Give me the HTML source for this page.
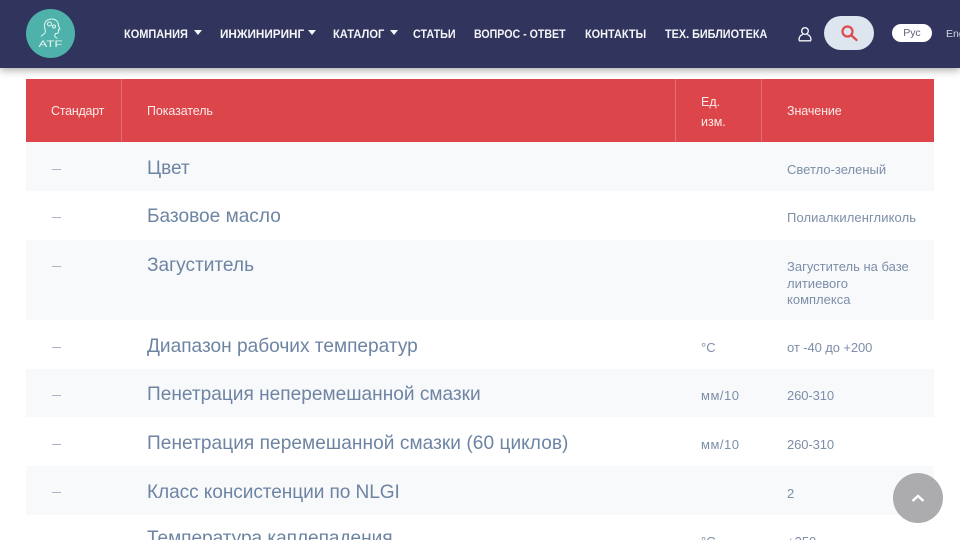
<!DOCTYPE html>
<html lang="ru"><head><meta charset="utf-8"><style>
html,body{margin:0;padding:0;width:960px;height:540px;overflow:hidden;background:#fff}
body{position:relative;font-family:"Liberation Sans",sans-serif}
.a{position:absolute;white-space:nowrap}
.hdr{left:0;top:0;width:960px;height:68px;background:#31345c;box-shadow:0 2px 8px rgba(0,0,0,.35)}
.n{top:27px;font-size:12px;line-height:14px;font-weight:bold;color:#f4f5f8;transform-origin:0 50%}
.car{top:30px;width:0;height:0;border-left:4.500px solid transparent;border-right:4.500px solid transparent;border-top:5px solid #f4f5f8}
.r{left:26px;width:908px}
.alt{background:#f8f9fb}
.h{color:#fbeaea;font-size:12.500px;line-height:16px}
.d{left:52px;width:9px;height:1px;background:#a9b3c4}
.t{left:147px;font-size:19.100px;line-height:22px;color:#6d84a3}
.v{font-size:13px;line-height:16px;color:#7d8ea8}
.sep{width:1px;top:79px;height:63px;background:#e66c6f}
</style></head><body>
<div class="a hdr"></div>
<svg class="a" style="left:26px;top:9px" width="49" height="49" viewBox="0 0 49 49">
<circle cx="24.500" cy="24.500" r="24.500" fill="#4fb2aa"/>
<g fill="none" stroke="#e8f5f3" stroke-width="1">
<path d="M19 24c1-2 0-4-.5-6-.8-5 3-8 7-8 4.500 0 7 3 7 6.500 0 1 1 2.500 1.500 3.500l-1.500.5v2.500c0 1-1 1.500-3 1.500l-1 3"/>
<path d="M19 24c-1 1.500-3 2-4 3.500M28.500 27.500l3 2"/>
<circle cx="23.500" cy="15" r="2"/><circle cx="28" cy="17.500" r="1.500"/>
</g>
<text x="12.500" y="38" textLength="24" lengthAdjust="spacingAndGlyphs" font-family="Liberation Sans" font-size="9" fill="#e8f5f3">ATF</text>
</svg>
<div class="a n" style="left:124px;transform:scaleX(.914)">КОМПАНИЯ</div><div class="a car" style="left:194px"></div>
<div class="a n" style="left:220px;transform:scaleX(.977)">ИНЖИНИРИНГ</div><div class="a car" style="left:308px"></div>
<div class="a n" style="left:333px;transform:scaleX(.927)">КАТАЛОГ</div><div class="a car" style="left:390px"></div>
<div class="a n" style="left:413px;transform:scaleX(.896)">СТАТЬИ</div>
<div class="a n" style="left:474px;transform:scaleX(.885)">ВОПРОС - ОТВЕТ</div>
<div class="a n" style="left:585px;transform:scaleX(.91)">КОНТАКТЫ</div>
<div class="a n" style="left:665px;transform:scaleX(.903)">ТЕХ. БИБЛИОТЕКА</div>
<svg class="a" style="left:797px;top:26px" width="16" height="16" viewBox="0 0 16 16" fill="none" stroke="#f4f5f8" stroke-width="1.400">
<circle cx="8" cy="5" r="3.300"/><path d="M2 14.500c0-3.500 1.500-5.500 3.800-6M14 14.500c0-3.500-1.500-5.500-3.800-6M2 14.800h12"/></svg>
<div class="a" style="left:824px;top:16px;width:50px;height:34px;border-radius:17px;background:#dde5ee"></div>
<svg class="a" style="left:840px;top:24px" width="18" height="18" viewBox="0 0 18 18" fill="none" stroke="#dc4a4d" stroke-width="2.200">
<circle cx="7.500" cy="7.500" r="5"/><path d="M11 11l5.500 5" stroke-linecap="round"/></svg>
<div class="a" style="left:892px;top:24px;width:40px;height:18px;border-radius:9px;background:#fff;color:#5c6478;font-size:10.500px;line-height:19px;text-align:center">Рус</div>
<div class="a" style="left:946px;top:27px;color:#d5d8e2;font-size:10.500px;line-height:14px">Eng</div>

<div class="a r" style="top:79px;height:63px;background:#dc4549"></div>
<div class="a sep" style="left:121px"></div><div class="a sep" style="left:675px"></div><div class="a sep" style="left:761px"></div>
<div class="a h" style="left:51px;top:103px;letter-spacing:-.25px">Стандарт</div>
<div class="a h" style="left:147px;top:103px;letter-spacing:-.1px">Показатель</div>
<div class="a h" style="left:701px;top:92px;line-height:20px">Ед.<br>изм.</div>
<div class="a h" style="left:787px;top:103px;letter-spacing:-.1px">Значение</div>

<div class="a r alt" style="top:142px;height:49px"></div>
<div class="a r alt" style="top:240px;height:80px"></div>
<div class="a r alt" style="top:369px;height:48px"></div>
<div class="a r alt" style="top:466px;height:49px"></div>

<div class="a d" style="top:169px"></div><div class="a t" style="top:158px">Цвет</div>
<div class="a v" style="left:787px;top:162px">Светло-зеленый</div>
<div class="a d" style="top:217px"></div><div class="a t" style="top:206px">Базовое масло</div>
<div class="a v" style="left:787px;top:210px;letter-spacing:.1px">Полиалкиленгликоль</div>
<div class="a d" style="top:266px"></div><div class="a t" style="top:255px">Загуститель</div>
<div class="a v" style="left:787px;top:259px;line-height:16.500px">Загуститель на базе<br>литиевого<br>комплекса</div>
<div class="a d" style="top:347px"></div><div class="a t" style="top:336px">Диапазон рабочих температур</div>
<div class="a v" style="left:701px;top:340px">°C</div><div class="a v" style="left:787px;top:340px;letter-spacing:-.1px">от -40 до +200</div>
<div class="a d" style="top:395px"></div><div class="a t" style="top:384px">Пенетрация неперемешанной смазки</div>
<div class="a v" style="left:701px;top:388px;letter-spacing:.5px">мм/10</div><div class="a v" style="left:787px;top:388px;letter-spacing:-.1px">260-310</div>
<div class="a d" style="top:444px"></div><div class="a t" style="top:433px;letter-spacing:.05px">Пенетрация перемешанной смазки (60 циклов)</div>
<div class="a v" style="left:701px;top:437px;letter-spacing:.5px">мм/10</div><div class="a v" style="left:787px;top:437px;letter-spacing:-.1px">260-310</div>
<div class="a d" style="top:492px"></div><div class="a t" style="top:482px;letter-spacing:-.08px">Класс консистенции по NLGI</div>
<div class="a v" style="left:787px;top:486px">2</div>
<div class="a t" style="top:528px;letter-spacing:-.05px">Температура каплепадения</div>
<div class="a v" style="left:701px;top:534px">°C</div><div class="a v" style="left:787px;top:534px">+250</div>

<div class="a" style="left:893px;top:473px;width:50px;height:50px;border-radius:50%;background:#acacae"></div>
<svg class="a" style="left:911px;top:493px" width="14" height="10" viewBox="0 0 14 10" fill="none" stroke="#fff" stroke-width="2.400"><path d="M1.500 8l5.500-5 5.500 5"/></svg>
</body></html>
